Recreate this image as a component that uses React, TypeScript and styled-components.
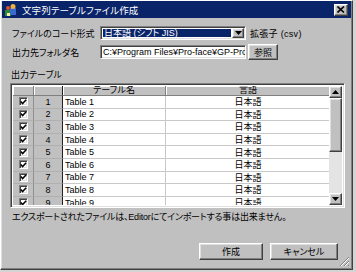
import styled, { createGlobalStyle } from "styled-components";

const GlobalStyle = createGlobalStyle`
  html, body {
    margin: 0;
    padding: 0;
    background: #d4d4d4;
  }
  body {
    font-family: "Liberation Sans", "Noto Sans CJK JP", sans-serif;
    font-size: 9px;
    font-feature-settings: "palt";
    color: #000;
  }
  * {
    box-sizing: border-box;
  }
`;

const raised = `
  border: 1px solid;
  border-color: #ffffff #404040 #404040 #ffffff;
  box-shadow: inset -1px -1px #808080, inset 1px 1px #dfdfdf;
`;

const sunken = `
  border: 1px solid;
  border-color: #808080 #ffffff #ffffff #808080;
  box-shadow: inset 1px 1px #404040, inset -1px -1px #dfdfdf;
`;

const Window = styled.div`
  position: relative;
  width: 353px;
  height: 270px;
  background: #c0c0c0;
  ${raised}
  padding: 0 1px 1px;
  display: flex;
  flex-direction: column;
`;

const TitleBar = styled.div`
  height: 17px;
  background: #0a246a;
  color: #fff;
  display: flex;
  align-items: center;
  padding: 0 3px 0 2px;
  gap: 4px;
  font-size: 9.5px;
`;

const TitleText = styled.span`
  flex: 1;
  letter-spacing: 0.1px;
`;

const CloseButton = styled.div`
  width: 14px;
  height: 12px;
  background: #c0c0c0;
  ${raised}
  display: flex;
  align-items: center;
  justify-content: center;
`;

const Body = styled.div`
  flex: 1;
  display: flex;
  flex-direction: column;
  padding: 8px 7px 0 8px;
`;

const FormRow = styled.div<{ $h: number; $gap?: number }>`
  display: flex;
  align-items: center;
  height: ${(p) => p.$h}px;
  margin-bottom: ${(p) => p.$gap ?? 0}px;
`;

const Label = styled.div`
  width: 90px;
  padding-left: 2px;
  white-space: nowrap;
`;

const Combo = styled.div`
  width: 146px;
  height: 14px;
  background: #fff;
  ${sunken}
  display: flex;
  align-items: stretch;
  padding: 2px 1px 2px 2px;
`;

const Selected = styled.div`
  flex: 1;
  background: #0a246a;
  color: #fff;
  line-height: 9px;
  padding-left: 1px;
  white-space: nowrap;
  overflow: hidden;
  margin-right: 1px;
`;

const DropButton = styled.div`
  width: 12px;
  margin: -1px 0;
  background: #c0c0c0;
  ${raised}
  display: flex;
  align-items: center;
  justify-content: center;
`;

const Suffix = styled.div`
  margin-left: 4px;
  white-space: nowrap;
  letter-spacing: 0.3px;
`;

const TextBox = styled.div`
  width: 146px;
  height: 14px;
  background: #fff;
  ${sunken}
  padding: 0 0 0 2px;
  line-height: 12px;
  white-space: nowrap;
  overflow: hidden;
`;

const PushButton = styled.div<{ $w: number; $h: number }>`
  width: ${(p) => p.$w}px;
  height: ${(p) => p.$h}px;
  background: #c0c0c0;
  ${raised}
  display: flex;
  align-items: center;
  justify-content: center;
  white-space: nowrap;
`;

const BrowseButton = styled(PushButton)`
  margin-left: 2px;
`;

const SectionLabel = styled.div`
  margin-top: 9px;
  height: 12px;
  line-height: 12px;
  padding-left: 1px;
`;

const TableBox = styled.div`
  margin-top: 2px;
  width: 335px;
  height: 125px;
  background: #fff;
  ${sunken}
  padding: 2px;
  display: flex;
  overflow: hidden;
`;

const Grid = styled.div`
  flex: 1;
  display: grid;
  grid-template-columns: 21px 29px 103px 165px;
  grid-template-rows: 10px;
  grid-auto-rows: 12.6px;
  overflow: hidden;
  align-content: start;
`;

const HeadCell = styled.div<{ $dark?: boolean }>`
  background: #c0c0c0;
  border-right: 1px solid ${(p) => (p.$dark ? "#202020" : "#808080")};
  border-bottom: 1px solid #808080;
  box-shadow: inset 1px 1px #fff;
  display: flex;
  align-items: center;
  justify-content: center;
  line-height: 9px;
  overflow: hidden;
`;

const RowHeadCell = styled.div<{ $dark?: boolean }>`
  background: #c0c0c0;
  border-right: 1px solid ${(p) => (p.$dark ? "#202020" : "#909090")};
  border-bottom: 1px solid #b0b0b0;
  display: flex;
  align-items: center;
  justify-content: center;
  overflow: hidden;
`;

const DataCell = styled.div<{ $center?: boolean }>`
  background: #fff;
  border-right: 1px solid #c8c8c8;
  border-bottom: 1px solid #c8c8c8;
  display: flex;
  align-items: center;
  justify-content: ${(p) => (p.$center ? "center" : "flex-start")};
  padding-left: ${(p) => (p.$center ? 0 : 2)}px;
  white-space: nowrap;
  overflow: hidden;
`;

const Check = styled.div`
  width: 9px;
  height: 9px;
  background: #fff;
  ${sunken}
  display: flex;
  align-items: center;
  justify-content: center;
`;

const ScrollBar = styled.div`
  width: 13px;
  display: flex;
  flex-direction: column;
  background: #e4e4e4;
`;

const ScrollArrow = styled.div`
  height: 12px;
  background: #c0c0c0;
  ${raised}
  display: flex;
  align-items: center;
  justify-content: center;
`;

const Thumb = styled.div`
  height: 54px;
  background: #c0c0c0;
  ${raised}
`;

const Track = styled.div`
  flex: 1;
`;

const Message = styled.div`
  margin-top: 3px;
  height: 12px;
  line-height: 12px;
  padding-left: 2px;
  white-space: nowrap;
  letter-spacing: -0.2px;
`;

const Footer = styled.div`
  margin-top: 20px;
  display: flex;
  justify-content: flex-end;
  gap: 7px;
  padding-right: 6px;
`;

const Grip = styled.svg`
  position: absolute;
  right: 2px;
  bottom: 2px;
`;

const rows = Array.from({ length: 9 }, (_, i) => i + 1);

function AppIcon() {
  return (
    <svg width="14" height="14" viewBox="0 0 14 14">
      <rect x="1" y="7" width="6" height="6" fill="#2a8a3a" />
      <rect x="6" y="5" width="6" height="7" fill="#3a6ad0" />
      <circle cx="9" cy="3.5" r="2.5" fill="#f0b040" />
      <circle cx="4" cy="5" r="2" fill="#e05030" />
      <rect x="3" y="10" width="3" height="3" fill="#f8f0a0" />
    </svg>
  );
}

function Tri({ up }: { up?: boolean }) {
  return (
    <svg width="7" height="4" viewBox="0 0 7 4">
      <polygon points={up ? "3.5,0 0,4 7,4" : "0,0 7,0 3.5,4"} fill="#000" />
    </svg>
  );
}

export default function App() {
  return (
    <>
      <GlobalStyle />
      <Window>
        <TitleBar>
          <AppIcon />
          <TitleText>文字列テーブルファイル作成</TitleText>
          <CloseButton>
            <svg width="8" height="7" viewBox="0 0 8 7">
              <path d="M0.5 0.5 L7 6.5 M7 0.5 L0.5 6.5" stroke="#000" strokeWidth="1.6" />
            </svg>
          </CloseButton>
        </TitleBar>
        <Body>
          <FormRow $h={14} $gap={4}>
            <Label>ファイルのコード形式</Label>
            <Combo>
              <Selected>日本語 (シフト JIS)</Selected>
              <DropButton>
                <Tri />
              </DropButton>
            </Combo>
            <Suffix>拡張子 (csv)</Suffix>
          </FormRow>
          <FormRow $h={16}>
            <Label>出力先フォルダ名</Label>
            <TextBox>C:¥Program Files¥Pro-face¥GP-Pro</TextBox>
            <BrowseButton $w={30} $h={16}>参照</BrowseButton>
          </FormRow>
          <SectionLabel>出力テーブル</SectionLabel>
          <TableBox>
            <Grid>
              <HeadCell />
              <HeadCell $dark />
              <HeadCell>テーブル名</HeadCell>
              <HeadCell>言語</HeadCell>
              {rows.map((n) => (
                <Row key={n} n={n} />
              ))}
            </Grid>
            <ScrollBar>
              <ScrollArrow>
                <Tri up />
              </ScrollArrow>
              <Thumb />
              <Track />
              <ScrollArrow>
                <Tri />
              </ScrollArrow>
            </ScrollBar>
          </TableBox>
          <Message>エクスポートされたファイルは、Editorにてインポートする事は出来ません。</Message>
          <Footer>
            <PushButton $w={64} $h={17}>作成</PushButton>
            <PushButton $w={68} $h={17}>キャンセル</PushButton>
          </Footer>
        </Body>
        <Grip width="11" height="11" viewBox="0 0 11 11">
          <path d="M10 1 L1 10 M10 5 L5 10 M10 9 L9 10" stroke="#808080" strokeWidth="1" />
          <path d="M10 2 L2 10 M10 6 L6 10" stroke="#fff" strokeWidth="1" />
        </Grip>
      </Window>
    </>
  );
}

function Row({ n }: { n: number }) {
  return (
    <>
      <RowHeadCell>
        <Check>
          <svg width="7" height="6" viewBox="0 0 7 6">
            <path d="M0.8 2.6 L2.6 4.6 L6.2 0.8" stroke="#000" strokeWidth="1.5" fill="none" />
          </svg>
        </Check>
      </RowHeadCell>
      <RowHeadCell $dark>{n}</RowHeadCell>
      <DataCell>Table {n}</DataCell>
      <DataCell $center>日本語</DataCell>
    </>
  );
}
